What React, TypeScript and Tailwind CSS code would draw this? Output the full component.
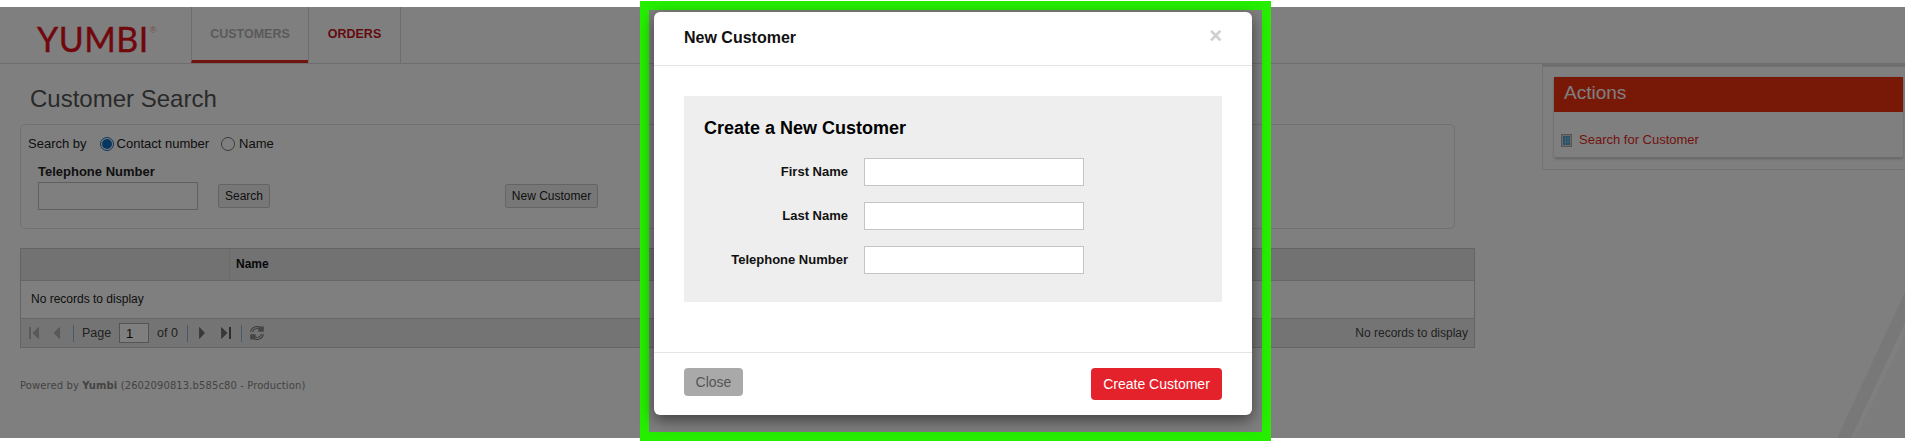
const ARIAL = "font-['Liberation_Sans',Arial,sans-serif]";

function PagerIcon({ kind, dim }: { kind: "first" | "prev" | "next" | "last"; dim?: boolean }) {
  const fill = dim ? "#b4b4b4" : "#707070";
  const stroke = dim ? "#9c9c9c" : "#5a5a5a";
  if (kind === "first")
    return (
      <svg width="10" height="12" viewBox="0 0 10 12" className="shrink-0">
        <rect x="0" y="0" width="2" height="12" fill={fill} />
        <path d="M9.5.5v11L4 6z" fill={fill} stroke={stroke} strokeWidth="0.6" />
      </svg>
    );
  if (kind === "prev")
    return (
      <svg width="8" height="12" viewBox="0 0 8 12" className="shrink-0">
        <path d="M6.5.5v11L1 6z" fill={fill} stroke={stroke} strokeWidth="0.6" />
      </svg>
    );
  if (kind === "next")
    return (
      <svg width="6" height="12" viewBox="0 0 6 12" className="shrink-0">
        <path d="M.5.5v11L5.5 6z" fill={fill} stroke={stroke} strokeWidth="0.6" />
      </svg>
    );
  return (
    <svg width="10" height="12" viewBox="0 0 10 12" className="shrink-0">
      <path d="M.5.5v11L6 6z" fill={fill} stroke={stroke} strokeWidth="0.6" />
      <rect x="8" y="0" width="2" height="12" fill={stroke} />
    </svg>
  );
}

function Refresh() {
  return (
    <svg width="16" height="16" viewBox="0 0 16 16" fill="none" className="shrink-0">
      <path d="M2.5 7A5.5 5.5 0 0 1 11.5 4" stroke="#6e6e6e" strokeWidth="3" />
      <path d="M2.5 7A5.5 5.5 0 0 1 11.5 4" stroke="#d8d8d8" strokeWidth="1.2" />
      <path d="M10 1.5h4.8v5.2H9.2z" fill="#8a8a8a" />
      <path d="M13.5 9A5.5 5.5 0 0 1 4.5 12" stroke="#6e6e6e" strokeWidth="3" />
      <path d="M13.5 9A5.5 5.5 0 0 1 4.5 12" stroke="#d8d8d8" strokeWidth="1.2" />
      <path d="M1.2 9.3h5.6L6 14.5H1.2z" fill="#8a8a8a" />
    </svg>
  );
}

function SearchIcon() {
  return (
    <svg width="11" height="13" viewBox="0 0 11 13" className="shrink-0">
      <rect x="0.5" y="0.5" width="10" height="12" fill="#d8d8d8" stroke="#a8a8a8" />
      <rect x="2" y="2" width="7" height="9" fill="#4a9ccf" />
      <path d="M2 5h7M2 8h7M4.5 2v9M7 2v9" stroke="#a5cfe6" strokeWidth="0.7" />
    </svg>
  );
}

function Sep() {
  return <span className="block w-px h-[17px] bg-[#8fb0d0] shrink-0" />;
}

function Field({ label, className }: { label: string; className?: string }) {
  return (
    <div className={`flex items-center ${className ?? ""}`}>
      <label className="w-[144px] text-right text-[13px] font-bold text-[#111] leading-none -mt-[1px]">{label}</label>
      <input className="ml-4 w-[220px] h-[28px] bg-white border border-[#c4c4c4]" />
    </div>
  );
}

export default function App() {
  return (
    <div className={`relative h-[441px] overflow-hidden bg-white ${ARIAL}`}>
      <div className="h-[7px]" />
      {/* page behind the dialog */}
      <header className="h-[57px] flex border-b border-[#dcdcdc] box-border">
        <div className="w-[191px] shrink-0 pl-[37px] pt-[10px] flex items-start">
          <span className="font-['Lato',sans-serif] text-[#e1101a] text-[34px] leading-[44px] tracking-[0.5px] [-webkit-text-stroke:0.4px_#e1101a]">YUMBI</span>
          <span className="text-[#e8a0a0] text-[9px] leading-none mt-[9px] ml-[1px]">®</span>
        </div>
        <nav className="flex h-[56px] text-[12.5px] font-bold">
          <div className="w-[117px] border-l border-[#dcdcdc] border-b-[3px] border-b-[#e5281d] flex items-center justify-center text-[#b5b5b5] pt-[1px]">CUSTOMERS</div>
          <div className="w-[93px] border-l border-r border-[#dcdcdc] flex items-center justify-center text-[#c8141e] pb-[2px]">ORDERS</div>
        </nav>
      </header>
      <div className="flex">
        <main className="w-[1542px] shrink-0 pl-[20px] pr-[67px]">
          <h1 className="h-[60px] pl-[10px] pt-[21px] text-[24px] leading-[28px] text-[#555]">Customer Search</h1>
          <section className="w-[1435px] h-[105px] border border-[#e3e3e3] rounded-[5px] px-[7px] pt-[10px] box-border">
            <div className="flex items-center h-[18px] text-[13px] text-[#222]">
              <span>Search by</span>
              <span className="ml-[13px] w-[14px] h-[14px] rounded-full border border-[#0f6cbd] flex items-center justify-center">
                <span className="w-[10px] h-[10px] rounded-full bg-[#0f6cbd]" />
              </span>
              <span className="ml-[3px]">Contact number</span>
              <span className="ml-[12px] w-[14px] h-[14px] rounded-full border border-[#777]" />
              <span className="ml-[4px]">Name</span>
            </div>
            <div className="mt-[11px] ml-[10px] text-[13px] font-bold leading-[16px] text-[#222]">Telephone Number</div>
            <div className="mt-[2px] flex items-center ml-[10px]">
              <input className="w-[160px] h-[28px] border border-[#c0c0c0] bg-white" />
              <button className="ml-[20px] w-[52px] h-[24px] border border-[#c8c8c8] rounded-[2px] bg-[#efefef] text-[12px] text-[#222]">Search</button>
              <button className="ml-[235px] w-[93px] h-[24px] border border-[#c8c8c8] rounded-[2px] bg-[#efefef] text-[12px] text-[#222]">New Customer</button>
            </div>
          </section>
          <section className="mt-[19px] w-[1455px] h-[100px] border border-[#c8c8c8] text-[12px] box-border">
            <div className="h-[32px] flex border-b border-[#cfcfcf] bg-[#e4e4e4] font-bold text-[#111] box-border">
              <div className="w-[209px] border-r border-[#d4d4d4]" />
              <div className="pl-[6px] flex items-center pb-[1px]">Name</div>
            </div>
            <div className="h-[38px] flex items-center pl-[10px] pb-[1px] border-b border-[#cfcfcf] text-[#222] box-border">No records to display</div>
            <div className="h-[28px] flex items-center pl-[8px] pr-[6px] bg-[#e9e9e9] text-[#444]">
              <PagerIcon kind="first" dim />
              <span className="ml-[14px]"><PagerIcon kind="prev" dim /></span>
              <span className="ml-[12px]"><Sep /></span>
              <span className="ml-[8px] w-[28px] text-[12.5px] whitespace-nowrap">Page</span>
              <input className="ml-[9px] w-[30px] h-[20px] border border-[#a8a8a8] bg-white pl-[6px] text-[13px] text-[#111]" defaultValue="1" />
              <span className="ml-[8px] w-[20px] text-[12.5px] whitespace-nowrap">of 0</span>
              <span className="ml-[10px]"><Sep /></span>
              <span className="ml-[11px]"><PagerIcon kind="next" /></span>
              <span className="ml-[16px]"><PagerIcon kind="last" /></span>
              <span className="ml-[10px]"><Sep /></span>
              <span className="ml-[7px]"><Refresh /></span>
              <span className="ml-auto text-[#444]">No records to display</span>
            </div>
          </section>
          <footer className="mt-[30px] text-[10px] tracking-[0.1px] text-[#888] font-['DejaVu_Sans',sans-serif]">
            Powered by <b>Yumbi</b> (2602090813.b585c80 - Production)
          </footer>
        </main>
        <aside className="flex-1 h-[106px] border-l border-b border-t-[3px] border-[#e6e6e6] border-t-[#dcdcdc] pl-[11px] pr-[2px] pt-[10px] box-border">
          <div className="h-[81px] rounded-[2px] border-b border-[#d8d8d8] shadow-[0_1px_3px_rgba(0,0,0,0.25)] box-border">
            <div className="h-[35px] bg-[#f1300f] text-white text-[19px] pl-[10px] pb-[2px] flex items-center">Actions</div>
            <div className="h-[44px] flex items-center pl-[7px] pt-[12px] box-border">
              <SearchIcon />
              <span className="ml-[7px] text-[13px] text-[#e5281d]">Search for Customer</span>
            </div>
          </div>
        </aside>
      </div>
      {/* corner decoration */}
      <svg className="absolute right-0 top-[292px]" width="68" height="146" viewBox="0 0 68 146">
        <path d="M0 146 L68 0 L68 31 L14 146 Z" fill="#f1f1f1" />
        <path d="M18 146 L68 43 L68 146 Z" fill="#f8f8f8" />
      </svg>

      {/* backdrop */}
      <div className="absolute left-0 right-0 top-[7px] h-[431px] bg-black/50" />

      {/* dialog with its green outline */}
      <div className="absolute left-[640px] top-[1px] w-[631px] h-[440px] border-[9px] border-[#25ee00] box-border">
        <div className="mt-[2px] ml-[5px] w-[598px] h-[403px] bg-white rounded-[6px] shadow-[0_5px_15px_rgba(0,0,0,0.5)] flex flex-col">
          <div className="h-[54px] shrink-0 border-b border-[#e5e5e5] flex items-center justify-between pl-[30px] pr-[30px]">
            <h2 className="text-[16px] font-bold text-[#111] -mt-[2px]">New Customer</h2>
            <span className="text-[22px] font-bold leading-none text-[#cfcfcf] -mt-[5px]">×</span>
          </div>
          <div className="h-[286px] shrink-0 px-[30px] pt-[30px] box-border">
            <div className="h-[206px] bg-[#eeeeee] pl-[20px] pt-[21px] box-border">
              <h3 className="text-[18px] font-bold leading-[22px] text-black">Create a New Customer</h3>
              <Field label="First Name" className="mt-[19px]" />
              <Field label="Last Name" className="mt-[16px]" />
              <Field label="Telephone Number" className="mt-[16px]" />
            </div>
          </div>
          <div className="flex-1 border-t border-[#e5e5e5] flex items-start justify-between px-[30px] pt-[15px]">
            <button className="w-[59px] h-[28px] rounded-[4px] bg-[#a9a9a9] text-[14px] text-[#555]">Close</button>
            <button className="w-[131px] h-[32px] rounded-[4px] bg-[#e4222b] text-[14px] text-white">Create Customer</button>
          </div>
        </div>
      </div>
    </div>
  );
}
